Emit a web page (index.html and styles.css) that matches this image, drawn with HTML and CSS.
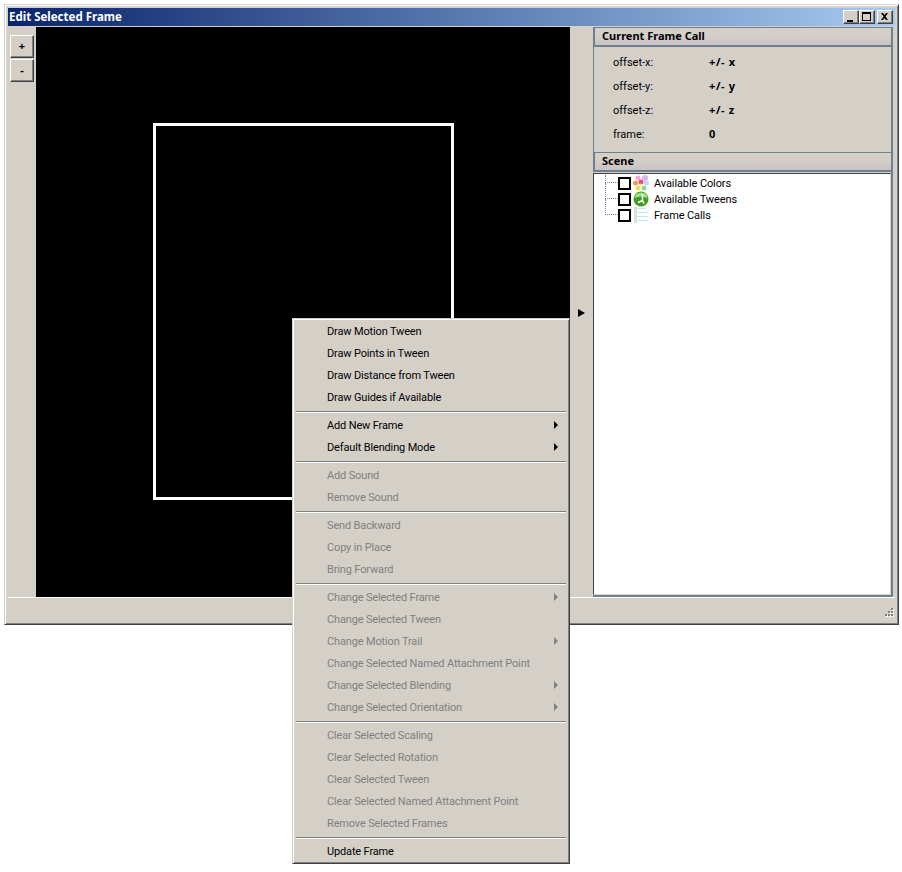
FILE: index.html
```html
<!DOCTYPE html>
<html lang="en">
<head>
    <meta charset="UTF-8">
    <title>Edit Selected Frame</title>
    <link rel="stylesheet" href="styles.css">
</head>
<body>
    <div class="window">
        <div class="titlebar">
            <span class="title">Edit Selected Frame</span>
            <div class="caption-buttons">
                <span class="caption-btn"><svg width="10" height="10" viewBox="0 0 10 10"><path d="M1 8h6v2H1z"/></svg></span>
                <span class="caption-btn"><svg width="10" height="10" viewBox="0 0 10 10"><path d="M0 0h9v9H0zM1 2v6h7V2z" fill-rule="evenodd"/></svg></span>
                <span class="caption-btn close"><svg width="10" height="10" viewBox="0 0 10 10"><path d="M1 1h2l1.500 2 1.500-2h2L5.500 4.500 8 8H6L4.500 6 3 8H1l2.500-3.500z"/></svg></span>
            </div>
        </div>

        <div class="main">
            <div class="toolbar">
                <button class="zoom-btn">+</button>
                <button class="zoom-btn">-</button>
            </div>
            <div class="canvas">
                <div class="frame-rect"></div>
            </div>
            <div class="splitter"><span class="splitter-arrow"></span></div>

            <div class="panel">
                <div class="panel-header">Current Frame Call</div>
                <div class="props">
                    <span>offset-x:</span><b>+/- x</b>
                    <span>offset-y:</span><b>+/- y</b>
                    <span>offset-z:</span><b>+/- z</b>
                    <span>frame:</span><b>0</b>
                </div>
                <div class="panel-header">Scene</div>
                <div class="tree">
                    <div class="tree-row first">
                        <span class="branch"></span><span class="check"></span>
                        <svg class="tree-icon" width="16" height="16" viewBox="0 0 16 16">
                            <circle cx="5" cy="3" r="2.500" fill="#f4a6d4"/>
                            <circle cx="12" cy="3" r="3" fill="#d6b4f0"/>
                            <circle cx="2.500" cy="8" r="2.500" fill="#f59a4a"/>
                            <circle cx="8" cy="7" r="2.500" fill="#ec4f78"/>
                            <circle cx="13.500" cy="8" r="2.500" fill="#c4d4f6"/>
                            <circle cx="5" cy="13" r="2.500" fill="#f4dc50"/>
                            <circle cx="11" cy="13" r="2.500" fill="#8edc8a"/>
                            <circle cx="8" cy="10" r="1.500" fill="#f9e7b0"/>
                        </svg>
                        <span class="tree-label">Available Colors</span>
                    </div>
                    <div class="tree-row">
                        <span class="branch"></span><span class="check"></span>
                        <svg class="tree-icon" width="16" height="16" viewBox="0 0 16 16">
                            <circle cx="8" cy="8" r="7.500" fill="#3f9e24"/>
                            <path d="M1.500 7a6.500 5.500 0 0 1 13 0q-6.500-3-13 0z" fill="#a4e084"/>
                            <path d="M9.500 3v6.500M9.500 9.500L5 11.500M9.500 9.500l1.500 3" stroke="#fff" stroke-width="1.500" fill="none"/>
                        </svg>
                        <span class="tree-label">Available Tweens</span>
                    </div>
                    <div class="tree-row last">
                        <span class="branch"></span><span class="check"></span>
                        <svg class="tree-icon" width="16" height="16" viewBox="0 0 16 16">
                            <path d="M1 0h3v16H1z" fill="#dedede"/>
                            <path d="M4 1h9v1H4zM4 5h11v1H4zM4 9h11v1H4zM4 13h11v1H4z" fill="#bfe6f8"/>
                        </svg>
                        <span class="tree-label">Frame Calls</span>
                    </div>
                </div>
            </div>
        </div>

        <div class="statusbar">
            <svg class="grip" width="11" height="11" viewBox="0 0 11 11">
                <path d="M9 2h2v2H9zM6 5h2v2H6zM9 5h2v2H9zM3 8h2v2H3zM6 8h2v2H6zM9 8h2v2H9z" fill="#fff"/>
                <path d="M8 1h2v2H8zM5 4h2v2H5zM8 4h2v2H8zM2 7h2v2H2zM5 7h2v2H5zM8 7h2v2H8z" fill="#808080"/>
            </svg>
        </div>
    </div>

    <!-- Context menu over the window -->
    <div class="menu">
        <div class="item">Draw Motion Tween</div>
        <div class="item">Draw Points in Tween</div>
        <div class="item">Draw Distance from Tween</div>
        <div class="item">Draw Guides if Available</div>
        <div class="sep"></div>
        <div class="item sub">Add New Frame</div>
        <div class="item sub">Default Blending Mode</div>
        <div class="sep"></div>
        <div class="item off">Add Sound</div>
        <div class="item off">Remove Sound</div>
        <div class="sep"></div>
        <div class="item off">Send Backward</div>
        <div class="item off">Copy in Place</div>
        <div class="item off">Bring Forward</div>
        <div class="sep"></div>
        <div class="item off sub">Change Selected Frame</div>
        <div class="item off">Change Selected Tween</div>
        <div class="item off sub">Change Motion Trail</div>
        <div class="item off">Change Selected Named Attachment Point</div>
        <div class="item off sub">Change Selected Blending</div>
        <div class="item off sub">Change Selected Orientation</div>
        <div class="sep"></div>
        <div class="item off">Clear Selected Scaling</div>
        <div class="item off">Clear Selected Rotation</div>
        <div class="item off">Clear Selected Tween</div>
        <div class="item off">Clear Selected Named Attachment Point</div>
        <div class="item off">Remove Selected Frames</div>
        <div class="sep"></div>
        <div class="item">Update Frame</div>
    </div>
</body>
</html>
```

FILE: styles.css
```css
html, body {
    margin: 0;
    padding: 0;
}

body {
    position: relative;
    width: 902px;
    height: 872px;
    overflow: hidden;
    background: #fff;
    font-family: Roboto, "Noto Sans", sans-serif;
    font-size: 11px;
    color: #000;
}

.window {
    box-sizing: border-box;
    width: 895px;
    height: 621px;
    margin: 4px 0 0 4px;
    padding: 3px 3px 0;
    background: #d4d0c8;
    border: 1px solid;
    border-color: #d4d0c8 #404040 #404040 #d4d0c8;
    box-shadow: inset 1px 1px 0 #fff, inset -1px -1px 0 #808080;
}

.titlebar {
    display: flex;
    align-items: center;
    justify-content: space-between;
    height: 18px;
    margin-bottom: 1px;
    padding: 0 2px 0 1px;
    background: linear-gradient(to right, #0a246a, #a6caf0);
}

.title {
    margin-top: -2px;
    color: #fff;
    font: bold 11.500px "Noto Sans", sans-serif;
}

.caption-buttons {
    display: flex;
}

.caption-btn {
    box-sizing: border-box;
    display: flex;
    align-items: center;
    justify-content: center;
    width: 16px;
    height: 14px;
    background: #d4d0c8;
    border: 1px solid;
    border-color: #fff #404040 #404040 #fff;
    box-shadow: inset -1px -1px 0 #808080;
}

.caption-btn.close {
    margin-left: 2px;
}

.main {
    display: flex;
    height: 571px;
    border-bottom: 1px solid #fff;
    box-sizing: border-box;
}

.toolbar {
    width: 28px;
    padding: 8px 0 0 2px;
    box-sizing: border-box;
}

.zoom-btn {
    display: block;
    box-sizing: border-box;
    width: 24px;
    height: 23px;
    margin: 0 0 1px;
    padding: 0 0 2px;
    font: bold 11px "Noto Sans", sans-serif;
    background: #d4d0c8;
    border: 1px solid;
    border-color: #fff #404040 #404040 #fff;
    box-shadow: inset -1px -1px 0 #808080;
}

.canvas {
    width: 534px;
    background: #000;
    overflow: hidden;
}

.frame-rect {
    box-sizing: border-box;
    width: 301px;
    height: 377px;
    margin: 96px 0 0 117px;
    border: 3px solid #fff;
}

.splitter {
    display: flex;
    align-items: center;
    justify-content: center;
    width: 23px;
    padding-top: 2px;
    box-sizing: border-box;
}

.splitter-arrow {
    width: 0;
    height: 0;
    border-left: 7px solid #000;
    border-top: 4px solid transparent;
    border-bottom: 4px solid transparent;
}

.panel {
    box-sizing: border-box;
    display: flex;
    flex-direction: column;
    width: 300px;
    border-right: 2px solid #6f8090;
    border-bottom: 2px solid #6f8090;
}

.panel-header {
    box-sizing: border-box;
    height: 20px;
    padding: 0 0 0 7px;
    font: bold 11px/15px "Noto Sans", sans-serif;
    background: linear-gradient(to bottom, #d4d0c8 40%, #c9c3c6);
    border-top: 1px solid #6f8090;
    border-bottom: 2px solid #6f8090;
    border-left: 2px solid #6f8090;
}

.props {
    display: grid;
    grid-template-columns: 96px 1fr;
    grid-auto-rows: 24px;
    align-items: center;
    height: 105px;
    box-sizing: border-box;
    padding: 3px 0 0 19px;
    border-left: 1px solid #6f8090;
}

.props b {
    margin-top: -2px;
    font-family: "Noto Sans", sans-serif;
    letter-spacing: 0.6px;
}

.tree {
    flex: 1;
    box-sizing: border-box;
    padding: 1px 0 0 11px;
    margin-top: 1px;
    background: #fff;
    border: 1px solid;
    border-color: #404040 #d4d0c8 #d4d0c8 #404040;
}

.tree-row {
    display: flex;
    align-items: center;
    height: 16px;
}

.branch {
    box-sizing: border-box;
    width: 13px;
    height: 16px;
    margin-top: -16px;
    border-left: 1px dotted #808080;
    border-bottom: 1px dotted #808080;
}

.tree-row.first .branch {
    align-self: flex-start;
    height: 8px;
    margin-top: 0;
}

.check {
    box-sizing: border-box;
    width: 13px;
    height: 13px;
    margin-right: 2px;
    background: #fff;
    border: 2px solid #000;
}

.tree-icon {
    margin-right: 5px;
}

.tree-label {
    letter-spacing: -0.1px;
}

.menu {
    position: absolute;
    left: 292px;
    top: 318px;
    box-sizing: border-box;
    width: 278px;
    height: 546px;
    background: #d4d0c8;
    border: 1px solid;
    border-color: #d4d0c8 #404040 #404040 #d4d0c8;
    padding: 1px;
    box-shadow: inset 1px 1px 0 #fff, inset -1px -1px 0 #808080;
}

.item {
    position: relative;
    height: 22px;
    line-height: 24px;
    padding-left: 33px;
    letter-spacing: -0.15px;
}

.item.off {
    color: #808080;
}

.item.sub::after {
    content: "";
    position: absolute;
    right: 10px;
    top: 7px;
    border-left: 4px solid #000;
    border-top: 4px solid transparent;
    border-bottom: 4px solid transparent;
}

.item.off.sub::after {
    border-left-color: #808080;
}

.sep {
    height: 1px;
    margin: 3px 2px 1px;
    background: #808080;
    border-bottom: 1px solid #fff;
}

.statusbar {
    display: flex;
    justify-content: flex-end;
    align-items: flex-end;
    height: 25px;
    padding: 0 1px 5px 0;
    box-sizing: border-box;
}
```
